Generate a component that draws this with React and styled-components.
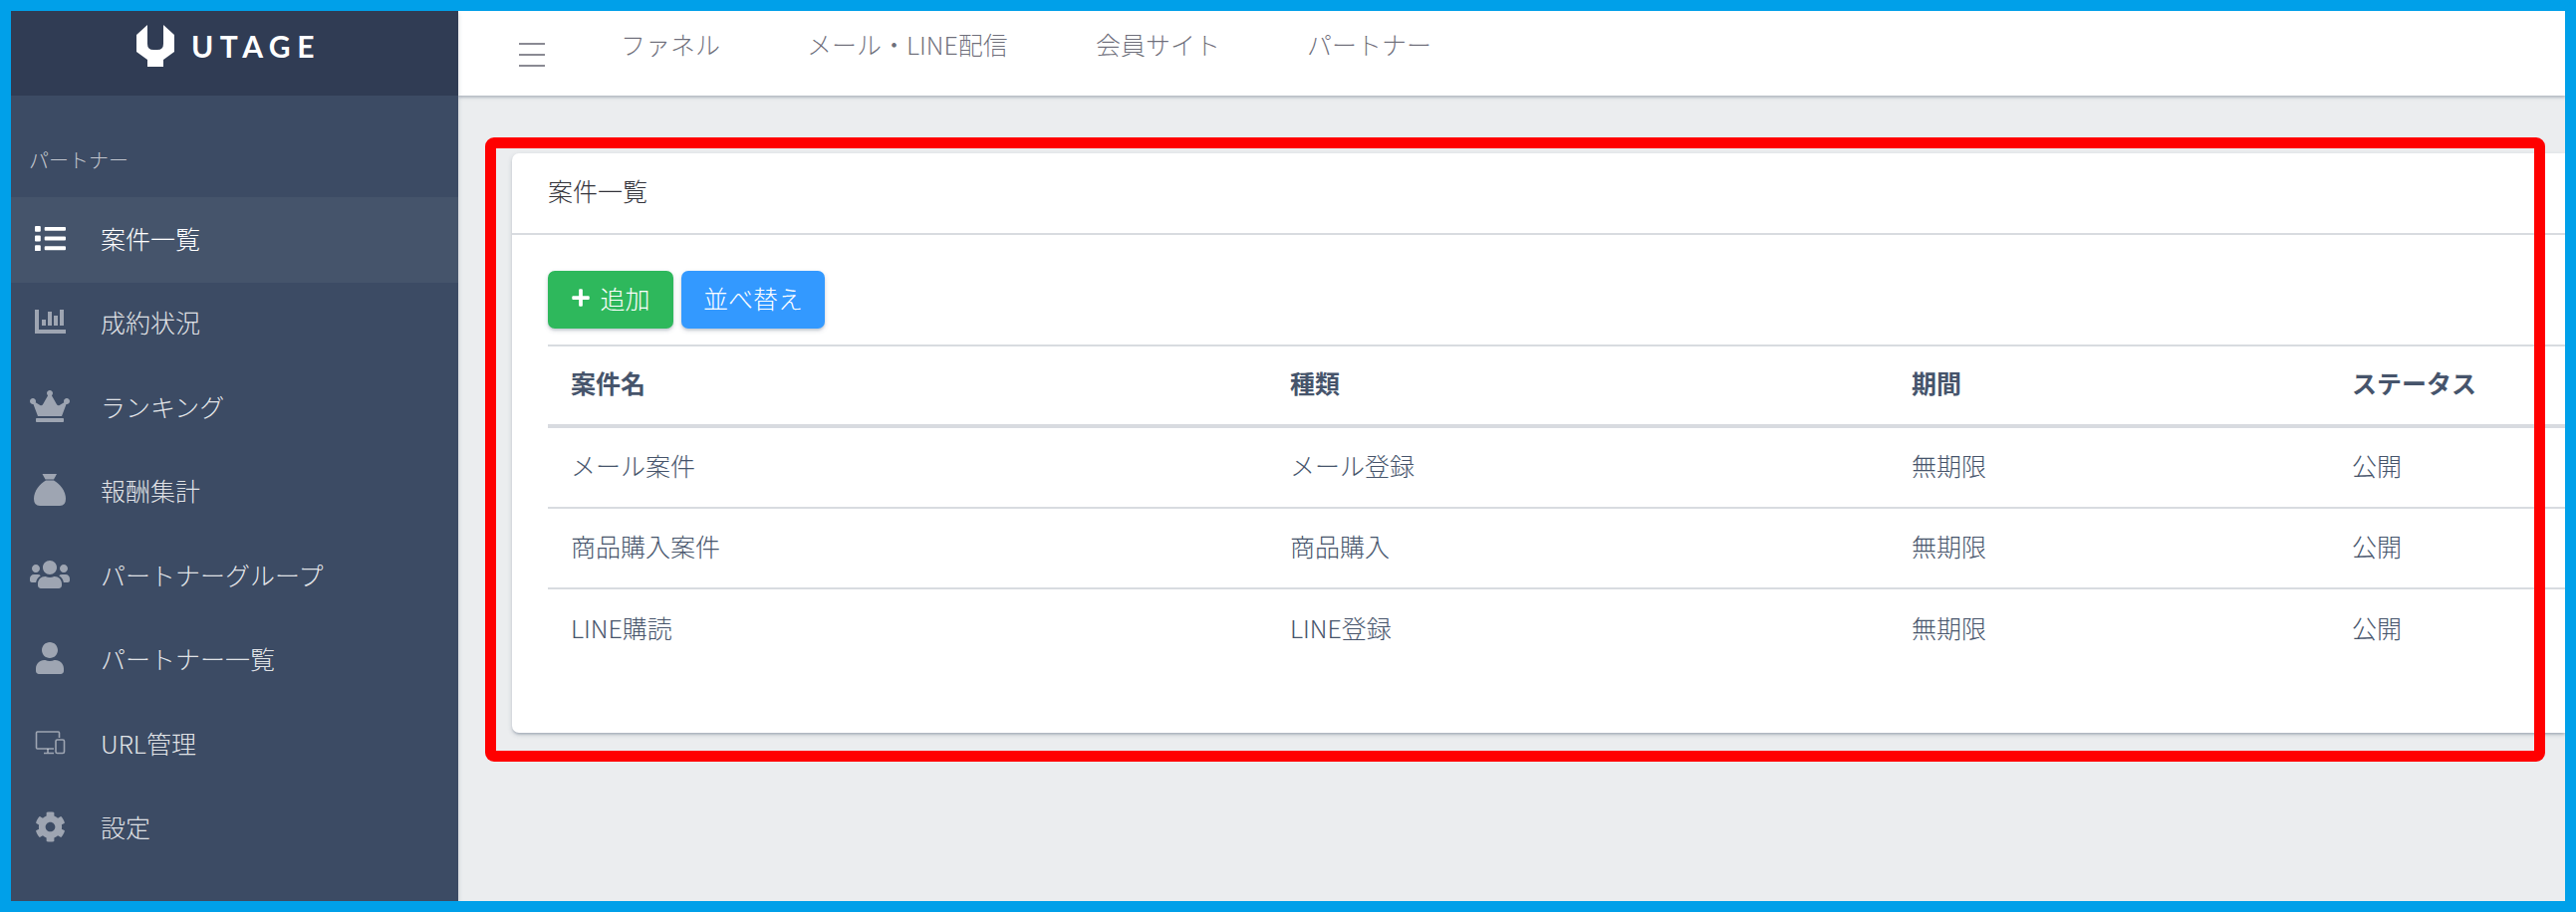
import React from "react";
import styled, { createGlobalStyle } from "styled-components";
import { FaCog, FaCrown, FaList, FaPlus, FaUser, FaUsers } from "react-icons/fa";

const GlobalStyle = createGlobalStyle`
  html, body {
    margin: 0;
    padding: 0;
    background: #00a0e9;
  }
  body {
    font-family: "Noto Sans CJK JP", "Liberation Sans", sans-serif;
    font-size: 25px;
    font-weight: 300;
    overflow: hidden;
  }
  * {
    box-sizing: border-box;
  }
`;

const Frame = styled.div`
  position: relative;
  width: 2586px;
  height: 916px;
  border: 11px solid #00a0e9;
  display: flex;
  background: #ebedef;
  overflow: hidden;
`;

const Sidebar = styled.aside`
  width: 449px;
  flex-shrink: 0;
  background: #3c4b64;
  display: flex;
  flex-direction: column;
  box-shadow: 0 2px 4px rgba(60, 75, 100, 0.25);
  z-index: 2;
`;

const Brand = styled.div`
  height: 85px;
  background: #303c54;
  display: flex;
  padding: 14px 0 0 126px;
  gap: 17px;
  color: #fff;
`;

const BrandName = styled.span`
  font-family: "Lato", sans-serif;
  font-weight: 700;
  font-size: 30px;
  line-height: 43px;
  letter-spacing: 6.5px;
`;

const NavTitle = styled.div`
  height: 102px;
  padding: 50px 0 0 18px;
  font-size: 20px;
  line-height: 30px;
  color: rgba(255, 255, 255, 0.7);
`;

const NavItem = styled.div`
  height: ${(p) => (p.$active ? "86px" : "84.5px")};
  display: flex;
  align-items: center;
  padding-bottom: ${(p) => (p.$active ? "4px" : "6px")};
  color: ${(p) => (p.$active ? "#fff" : "rgba(255, 255, 255, 0.87)")};
  background: ${(p) => (p.$active ? "rgba(255, 255, 255, 0.05)" : "transparent")};
`;

const NavIcon = styled.span`
  width: 78px;
  height: 40px;
  margin-right: 12px;
  display: flex;
  align-items: center;
  justify-content: center;
  flex-shrink: 0;
  color: ${(p) => (p.$active ? "#fff" : "rgba(255, 255, 255, 0.5)")};
`;

const Main = styled.div`
  flex: 1;
  min-width: 0;
  display: flex;
  flex-direction: column;
`;

const TopBar = styled.header`
  height: 85px;
  flex-shrink: 0;
  background: #fff;
  display: flex;
  padding: 13px 0 0 61px;
  box-shadow: 0 2px 2px rgba(60, 75, 100, 0.2), 0 1px 5px rgba(60, 75, 100, 0.2);
`;

const Burger = styled.div`
  width: 26px;
  padding-top: 14px;
  margin-right: 76px;
  color: #8a8a93;
`;

const TopLink = styled.a`
  line-height: 40px;
  color: rgba(0, 0, 21, 0.58);
  margin-right: ${(p) => p.$gap}px;
`;

const Content = styled.main`
  flex: 1;
  padding: 58px 0 0 54px;
`;

const Card = styled.section`
  background: #fff;
  height: 582px;
  border-radius: 7px 0 0 7px;
  box-shadow: 0 2px 2px rgba(60, 75, 100, 0.14), 0 3px 2px -2px rgba(60, 75, 100, 0.12),
    0 2px 5px rgba(60, 75, 100, 0.2);
`;

const CardHeader = styled.div`
  height: 82px;
  border-bottom: 2px solid #d8dbe0;
  padding: 0 0 6px 36px;
  display: flex;
  align-items: center;
  color: #33333a;
`;

const CardBody = styled.div`
  padding: 36px 0 0 36px;
`;

const Toolbar = styled.div`
  display: flex;
  gap: 8px;
  margin-bottom: 16px;
`;

const Button = styled.button`
  height: 58px;
  width: ${(p) => p.$width}px;
  border: none;
  border-radius: 7px;
  padding: 0 0 5px;
  background: ${(p) => p.$bg};
  color: #fff;
  font: inherit;
  display: flex;
  align-items: center;
  justify-content: center;
  gap: 9px;
  box-shadow: 0 2px 2px rgba(60, 75, 100, 0.14), 0 2px 5px rgba(60, 75, 100, 0.2);
`;

const Table = styled.div`
  border-top: 2px solid #d8dbe0;
  color: #46546b;
`;

const Row = styled.div`
  display: grid;
  grid-template-columns: 722px 624px 442px 1fr;
  height: ${(p) => (p.$head ? "82px" : "81px")};
  align-items: center;
  padding: 0 0 ${(p) => (p.$head ? "7px" : "5px")} 23px;
  font-weight: ${(p) => (p.$head ? 700 : 300)};
  border-bottom: ${(p) => (p.$head ? "4px" : "2px")} solid #d8dbe0;
  &:last-child {
    border-bottom: none;
  }
`;

const Cell = styled.div`
  white-space: nowrap;
  line-height: 36px;
`;

const Highlight = styled.div`
  position: absolute;
  left: 476px;
  top: 127px;
  width: 2068px;
  height: 627px;
  border: 11px solid #ff0000;
  border-radius: 9px;
  pointer-events: none;
  z-index: 3;
`;

const LogoMark = () => (
  <svg width="38" height="42" viewBox="0 0 38 42" fill="currentColor">
    <path d="M11 0V19Q11 25 17 25H21Q27 25 27 19V0L38 10V27L27 35V42H11V35L0 27V10Z" />
  </svg>
);

const ChartIcon = () => (
  <svg width="31" height="24" viewBox="0 0 31 24" fill="currentColor">
    <rect x="0" y="0" width="4" height="24" />
    <rect x="4" y="20" width="27" height="4" />
    <rect x="7" y="10" width="4" height="6" />
    <rect x="13" y="2" width="4" height="14" />
    <rect x="19" y="6" width="4" height="10" />
    <rect x="25" y="0" width="4" height="16" />
  </svg>
);

const DevicesIcon = () => (
  <svg width="31" height="24" viewBox="0 0 31 24" fill="none" stroke="currentColor" strokeWidth="1.6">
    <path d="M24.500 7V2Q24.500 1 23.500 1H2.500Q1.500 1 1.500 2V17Q1.500 18 2.500 18H19" />
    <path d="M13 18V22M9 22.500H19" />
    <rect x="21" y="9" width="8.500" height="13.500" rx="1.500" />
  </svg>
);

const BagIcon = () => (
  <svg width="32" height="32" viewBox="0 0 32 32" fill="currentColor">
    <path d="M8.500 0H23L20 5.500H11.500Z" />
    <path d="M12 6.500H20C26 10 32 17 32 25Q32 32 26 32H6Q0 32 0 25C0 17 6 10 12 6.500Z" />
  </svg>
);

const BurgerIcon = () => (
  <svg width="26" height="24" viewBox="0 0 26 24" stroke="currentColor" strokeWidth="2">
    <path d="M0 1H26M0 12H26M0 23H26" />
  </svg>
);

const navItems = [
  { label: "案件一覧", icon: <FaList size={31} />, active: true },
  { label: "成約状況", icon: <ChartIcon /> },
  { label: "ランキング", icon: <FaCrown size={40} /> },
  { label: "報酬集計", icon: <BagIcon /> },
  { label: "パートナーグループ", icon: <FaUsers size={40} /> },
  { label: "パートナー一覧", icon: <FaUser size={32} /> },
  { label: "URL管理", icon: <DevicesIcon /> },
  { label: "設定", icon: <FaCog size={31} /> },
];

const topLinks = [
  { label: "ファネル", gap: 87 },
  { label: "メール・LINE配信", gap: 88 },
  { label: "会員サイト", gap: 87 },
  { label: "パートナー", gap: 0 },
];

const rows = [
  ["メール案件", "メール登録", "無期限", "公開"],
  ["商品購入案件", "商品購入", "無期限", "公開"],
  ["LINE購読", "LINE登録", "無期限", "公開"],
];

const App = () => {
  return (
    <Frame>
      <GlobalStyle />
      <Sidebar>
        <Brand>
          <LogoMark />
          <BrandName>UTAGE</BrandName>
        </Brand>
        <NavTitle>パートナー</NavTitle>
        {navItems.map((item) => (
          <NavItem key={item.label} $active={item.active}>
            <NavIcon $active={item.active}>{item.icon}</NavIcon>
            {item.label}
          </NavItem>
        ))}
      </Sidebar>
      <Main>
        <TopBar>
          <Burger>
            <BurgerIcon />
          </Burger>
          {topLinks.map((link) => (
            <TopLink key={link.label} $gap={link.gap}>
              {link.label}
            </TopLink>
          ))}
        </TopBar>
        <Content>
          <Card>
            <CardHeader>案件一覧</CardHeader>
            <CardBody>
              <Toolbar>
                <Button $bg="#2eb85c" $width={126}>
                  <FaPlus size={20} />
                  追加
                </Button>
                <Button $bg="#3399ff" $width={144}>
                  並べ替え
                </Button>
              </Toolbar>
              <Table>
                <Row $head>
                  <Cell>案件名</Cell>
                  <Cell>種類</Cell>
                  <Cell>期間</Cell>
                  <Cell>ステータス</Cell>
                </Row>
                {rows.map((row) => (
                  <Row key={row[0]}>
                    {row.map((cell, i) => (
                      <Cell key={i}>{cell}</Cell>
                    ))}
                  </Row>
                ))}
              </Table>
            </CardBody>
          </Card>
        </Content>
      </Main>
      <Highlight />
    </Frame>
  );
};

export default App;
